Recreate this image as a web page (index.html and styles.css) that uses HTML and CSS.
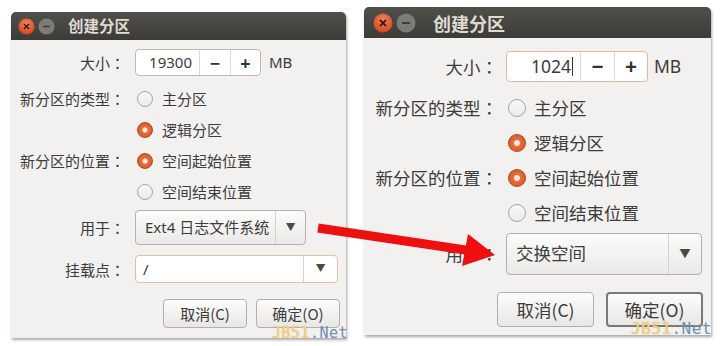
FILE: index.html
```html
<!DOCTYPE html>
<html lang="zh-CN">
    <head>
        <meta charset="UTF-8" />
        <title>创建分区</title>
        <link rel="stylesheet" href="styles.css">
    </head>
    <body>
        <div class="escritorio">
            <!-- DIALOGO PEQUEÑO -->
            <section class="dialogo dialogo--chico">
                <header class="barra">
                    <svg class="boton-ventana" viewBox="0 0 20 20">
                        <defs>
                            <radialGradient id="rojo1" cx="50%" cy="35%" r="65%">
                                <stop offset="0" stop-color="#f5855e"/>
                                <stop offset="1" stop-color="#d2431b"/>
                            </radialGradient>
                        </defs>
                        <circle cx="10" cy="10" r="9.5" fill="url(#rojo1)"/>
                        <path d="M7 7 L13 13 M13 7 L7 13" stroke="#3d1d12" stroke-width="1.8"/>
                    </svg>
                    <svg class="boton-ventana" viewBox="0 0 20 20">
                        <circle cx="10" cy="10" r="9.5" fill="#7d7b76"/>
                        <path d="M6 10 L14 10" stroke="#3a3935" stroke-width="1.8"/>
                    </svg>
                    <h1>创建分区</h1>
                </header>

                <div class="formulario">
                    <div class="fila fila--spin">
                        <span class="etiqueta">大小<span lang="ja">：</span></span>
                        <div class="spin">
                            <span class="spin-valor">19300</span>
                            <span class="spin-boton">−</span>
                            <span class="spin-boton">+</span>
                        </div>
                        <span class="unidad">MB</span>
                    </div>
                    <div class="fila fila--radio primera">
                        <span class="etiqueta">新分区的类型<span lang="ja">：</span></span>
                        <span class="radio"></span>主分区
                    </div>
                    <div class="fila fila--radio">
                        <span class="etiqueta"></span>
                        <span class="radio activo"></span>逻辑分区
                    </div>
                    <div class="fila fila--radio">
                        <span class="etiqueta">新分区的位置<span lang="ja">：</span></span>
                        <span class="radio activo"></span>空间起始位置
                    </div>
                    <div class="fila fila--radio">
                        <span class="etiqueta"></span>
                        <span class="radio"></span>空间结束位置
                    </div>
                    <div class="fila fila--combo">
                        <span class="etiqueta">用于<span lang="ja">：</span></span>
                        <div class="combo combo--uso">
                            <span class="combo-texto">Ext4 日志文件系统</span>
                            <span class="combo-flecha">▼</span>
                        </div>
                    </div>
                    <div class="fila fila--montaje">
                        <span class="etiqueta">挂载点<span lang="ja">：</span></span>
                        <div class="combo combo--entrada">
                            <span class="combo-texto">/</span>
                            <span class="combo-flecha">▼</span>
                        </div>
                    </div>
                    <div class="acciones">
                        <button>取消(C)</button>
                        <button>确定(O)</button>
                    </div>
                </div>
                <div class="marca"><span class="marca-jb">JB51</span>.Net</div>
            </section>

            <!-- DIALOGO GRANDE -->
            <section class="dialogo dialogo--grande">
                <header class="barra">
                    <svg class="boton-ventana" viewBox="0 0 20 20">
                        <defs>
                            <radialGradient id="rojo2" cx="50%" cy="35%" r="65%">
                                <stop offset="0" stop-color="#f5855e"/>
                                <stop offset="1" stop-color="#d2431b"/>
                            </radialGradient>
                        </defs>
                        <circle cx="10" cy="10" r="9.5" fill="url(#rojo2)"/>
                        <path d="M7 7 L13 13 M13 7 L7 13" stroke="#3d1d12" stroke-width="1.8"/>
                    </svg>
                    <svg class="boton-ventana" viewBox="0 0 20 20">
                        <circle cx="10" cy="10" r="9.5" fill="#7d7b76"/>
                        <path d="M6 10 L14 10" stroke="#3a3935" stroke-width="1.8"/>
                    </svg>
                    <h1>创建分区</h1>
                </header>

                <div class="formulario">
                    <div class="fila fila--spin">
                        <span class="etiqueta">大小<span lang="ja">：</span></span>
                        <div class="spin enfocado">
                            <span class="spin-valor">1024<span class="cursor"></span></span>
                            <span class="spin-boton">−</span>
                            <span class="spin-boton">+</span>
                        </div>
                        <span class="unidad">MB</span>
                    </div>
                    <div class="fila fila--radio primera">
                        <span class="etiqueta">新分区的类型<span lang="ja">：</span></span>
                        <span class="radio"></span>主分区
                    </div>
                    <div class="fila fila--radio">
                        <span class="etiqueta"></span>
                        <span class="radio activo"></span>逻辑分区
                    </div>
                    <div class="fila fila--radio">
                        <span class="etiqueta">新分区的位置<span lang="ja">：</span></span>
                        <span class="radio activo"></span>空间起始位置
                    </div>
                    <div class="fila fila--radio">
                        <span class="etiqueta"></span>
                        <span class="radio"></span>空间结束位置
                    </div>
                    <div class="fila fila--combo">
                        <span class="etiqueta">用于<span lang="ja">：</span></span>
                        <div class="combo combo--uso">
                            <span class="combo-texto">交换空间</span>
                            <span class="combo-flecha">▼</span>
                        </div>
                    </div>
                    <div class="acciones">
                        <button>取消(C)</button>
                        <button class="predeterminado">确定(O)</button>
                    </div>
                </div>
                <div class="marca"><span class="marca-jb">JB51</span>.Net</div>
            </section>

            <!-- FLECHA ROJA -->
            <svg class="flecha" viewBox="0 0 724 346">
                <line x1="318" y1="228" x2="472" y2="251" stroke="#ee1010" stroke-width="9"/>
                <polygon points="468,234 495,255 462,266" fill="#ee1010"/>
            </svg>
        </div>
    </body>
</html>
```

FILE: styles.css
```css
/* CREAR PARTICION */
* {
    box-sizing: border-box;
    margin: 0;
    padding: 0;
}

body {
    background: white;
    font-family: "Noto Sans", "Noto Sans CJK SC", sans-serif;
    color: #3c3c3c;
}

.escritorio {
    position: relative;
    display: flex;
    align-items: flex-start;
    width: 724px;
    height: 346px;
    padding-left: 11px;
    overflow: hidden;
}

.dialogo {
    position: relative;
    background: #f2f1f0;
    border-radius: 5px 5px 0 0;
    box-shadow: 1px 2px 3px rgba(0, 0, 0, 0.35);
}

/* tamaños de cada dialogo */
.dialogo--chico {
    --fs: 15px;
    --titulo-h: 28px;
    --titulo-fs: 15.5px;
    --boton-v: 17px;
    --etiqueta-w: 105px;
    --hueco: 10px;
    --spin-h: 27px;
    --spin-valor: 64px;
    --spin-boton: 30px;
    --fila-h: 31px;
    --radio: 16px;
    --combo-h: 35px;
    --combo-w: 171px;
    --flecha-w: 29px;
    --boton-h: 29px;
    --boton-w: 84px;
    width: 335px;
    margin-top: 12px;
}

.dialogo--grande {
    --fs: 17.5px;
    --titulo-h: 31px;
    --titulo-fs: 18px;
    --boton-v: 20px;
    --etiqueta-w: 124px;
    --hueco: 8px;
    --spin-h: 31px;
    --spin-valor: 74px;
    --spin-boton: 33px;
    --fila-h: 35px;
    --radio: 18px;
    --combo-h: 42px;
    --combo-w: 196px;
    --flecha-w: 32px;
    --boton-h: 35px;
    --boton-w: 97px;
    width: 347px;
    margin-top: 7px;
    margin-left: 18px;
}

.barra {
    display: flex;
    align-items: center;
    gap: 3px;
    height: var(--titulo-h);
    padding-left: 7px;
    background: linear-gradient(#504f4a, #3c3b37);
    border-radius: 5px 5px 0 0;
}

.dialogo--grande .barra {
    padding-left: 9px;
}

.boton-ventana {
    width: var(--boton-v);
    height: var(--boton-v);
}

.barra h1 {
    margin-left: 10px;
    font-family: "Noto Sans CJK SC", sans-serif;
    font-size: var(--titulo-fs);
    font-weight: bold;
    color: #dfdbd2;
    line-height: 1;
}

.dialogo--grande .barra h1 {
    margin-left: 14px;
}

.formulario {
    display: flex;
    flex-direction: column;
    padding: 9px 6px 10px 9px;
    font-size: var(--fs);
}

.dialogo--grande .formulario {
    padding: 13px 8px 8px 10px;
}

.fila {
    display: flex;
    align-items: center;
    gap: var(--hueco);
    line-height: 1;
    white-space: nowrap;
}

.etiqueta {
    flex: none;
    width: var(--etiqueta-w);
    text-align: right;
    font-family: "Noto Sans CJK SC", sans-serif;
}

.fila--spin {
    height: var(--spin-h);
}

.fila--radio {
    height: var(--fila-h);
    font-family: "Noto Sans CJK SC", sans-serif;
}

.fila--radio.primera {
    margin-top: 7px;
}

.dialogo--grande .fila--radio.primera {
    margin-top: 8px;
}

.fila--combo {
    height: var(--combo-h);
    margin-top: 3px;
}

.fila--montaje {
    height: 28px;
    margin-top: 10px;
}

/* caja numerica */
.spin {
    display: flex;
    height: 100%;
    background: white;
    border: 1px solid #bdb9b2;
    border-radius: 4px;
}

.spin.enfocado {
    border-color: #e7b7a6;
}

.spin-valor {
    display: flex;
    align-items: center;
    justify-content: flex-end;
    width: var(--spin-valor);
    padding-right: 7px;
    border-right: 1px solid #dedbd6;
}

.cursor {
    display: inline-block;
    width: 1px;
    height: 1.1em;
    margin-left: 1px;
    background: #333;
}

.spin-boton {
    display: flex;
    align-items: center;
    justify-content: center;
    width: var(--spin-boton);
    font-weight: bold;
    font-size: 1.2em;
    color: #333;
}

.spin-boton + .spin-boton {
    border-left: 1px solid #dedbd6;
}

.unidad {
    margin-left: -2px;
}

/* botones de opcion */
.radio {
    flex: none;
    width: var(--radio);
    height: var(--radio);
    margin-left: 2px;
    margin-right: -1px;
    background: linear-gradient(#f8f8f7, #ecebe9);
    border: 1px solid #a9a59f;
    border-radius: 50%;
}

.dialogo--grande .radio {
    margin-right: 0;
}

.radio.activo {
    background: radial-gradient(circle, #fbe7dc 0 22%, #e8703f 30%, #d04d1c 100%);
    border-color: #b54a22;
}

/* combos */
.combo {
    display: flex;
    height: 100%;
    background: linear-gradient(#fbfbfa, #ebeae8);
    border: 1px solid #b5b1aa;
    border-radius: 4px;
    font-family: "Noto Sans CJK SC", sans-serif;
}

.combo--uso {
    width: var(--combo-w);
}

.combo--entrada {
    width: 203px;
    background: white;
    border-color: #dcc2a4;
}

.combo-texto {
    flex: 1;
    display: flex;
    align-items: center;
    padding-left: 9px;
    font-family: "Noto Sans", "Noto Sans CJK SC", sans-serif;
    white-space: nowrap;
    border-right: 1px solid #d6d3ce;
}

.combo--entrada .combo-texto {
    padding-left: 7px;
}

.combo-flecha {
    display: flex;
    align-items: center;
    justify-content: center;
    width: var(--flecha-w);
    font-size: 0.65em;
    color: #4a4a48;
}

.combo--entrada .combo-flecha {
    width: 33px;
}

/* botones de accion */
.acciones {
    display: flex;
    justify-content: flex-end;
    gap: 9px;
    margin-top: 16px;
}

.dialogo--grande .acciones {
    gap: 12px;
    margin-top: 17px;
}

button {
    width: var(--boton-w);
    height: var(--boton-h);
    font-family: "Noto Sans CJK SC", sans-serif;
    font-size: var(--fs);
    color: #3c3c3c;
    background: linear-gradient(#fcfcfb, #e8e7e5);
    border: 1px solid #b3afa8;
    border-radius: 4px;
}

button.predeterminado {
    border: 2px solid #7b7975;
}

/* marca de agua */
.marca {
    position: absolute;
    right: -2px;
    bottom: -4px;
    font-family: "DejaVu Sans Mono", monospace;
    font-size: 15px;
    color: #6f8fb3;
    letter-spacing: 0.5px;
}

.dialogo--grande .marca {
    right: -1px;
    bottom: -3px;
    font-size: 16px;
}

.marca-jb {
    color: #f3d58a;
    text-shadow: 0 0 1px #d59a3e;
}

.flecha {
    position: absolute;
    top: 0;
    left: 0;
    width: 724px;
    height: 346px;
    pointer-events: none;
}
```
